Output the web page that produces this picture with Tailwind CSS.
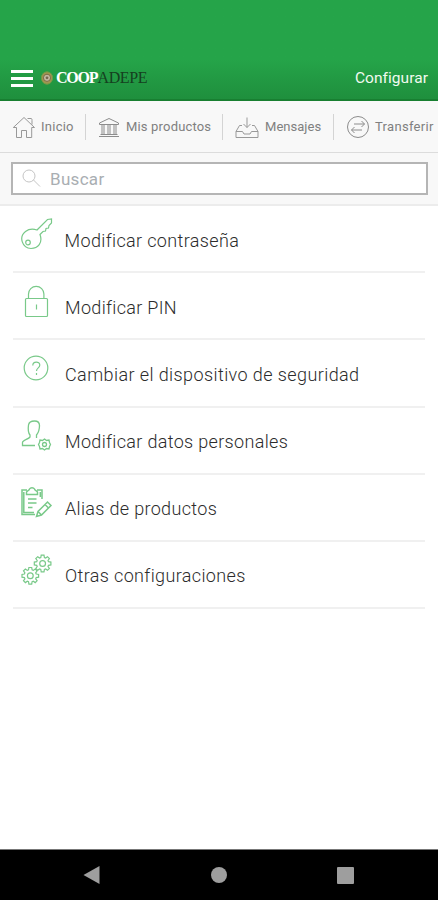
<!DOCTYPE html>
<html lang="es">
<head>
<meta charset="utf-8">
<meta name="viewport" content="width=device-width, initial-scale=1">
<title>Configurar</title>
<script src="https://cdn.jsdelivr.net/npm/@tailwindcss/browser@4"></script>
</head>
<body class="bg-white">
<div class="flex h-[900px] w-[438px] flex-col overflow-hidden bg-white font-['Roboto',sans-serif]">
  <header class="flex h-[101px] shrink-0 items-end border-b-2 border-[#187f31] bg-linear-to-b from-[#25a449] from-60% to-[#1f8f3d] pl-[11px] pr-[10px]">
    <div class="flex h-[43px] w-full items-center">
      <div class="mt-[2px] flex w-[22px] flex-col gap-[4.5px]">
        <div class="h-[2.5px] bg-white"></div>
        <div class="h-[2.5px] bg-white"></div>
        <div class="h-[2.5px] bg-white"></div>
      </div>
      <svg class="ml-[7px]" width="14" height="16" viewBox="0 0 14 16" fill="none">
        <ellipse cx="7" cy="8" rx="5.6" ry="6.2" fill="#a09650" stroke="#6f9a45"/>
        <circle cx="7" cy="7.8" r="3.6" fill="#c3b8a0" stroke="#7b6a44"/>
        <circle cx="7" cy="7.8" r="1.4" fill="#75664e"/>
      </svg>
      <div class="ml-[2px] whitespace-nowrap font-['Liberation_Serif',serif] text-[16px] leading-5"><span class="font-bold tracking-[-1.2px] text-white">COOP</span><span class="tracking-[-0.35px] text-[#15401f]">ADEPE</span></div>
      <div class="ml-auto mt-[3px] text-[15.5px] tracking-[0.05px] text-[#f1faef]">Configurar</div>
    </div>
  </header>

  <nav class="flex h-[52px] shrink-0 items-center overflow-hidden border-b border-[#dcdcdc] bg-[#f8f8f8] text-[13px] whitespace-nowrap text-[#808080]">
    <div class="flex h-[26px] w-[86px] shrink-0 items-center border-r border-[#d4d4d4] pl-[12px]">
      <svg class="mt-[2px]" width="24" height="24" viewBox="0 0 24 24" fill="none" stroke="#999" stroke-width="1"><path d="M4.5 11.5H1.3L12 1.5l10.5 10h-2.8v10h-5.2v-7H9.500v7h-5zM15.500 2.500h3.500c1 0 1 1 1 2v4"/></svg>
      <span class="ml-[5px] tracking-[0.25px]">Inicio</span>
    </div>
    <div class="flex h-[26px] w-[137px] shrink-0 items-center border-r border-[#d4d4d4] pl-[12px]">
      <svg class="mt-[3px]" width="22" height="22" viewBox="0 0 22 22" fill="none" stroke="#8c8c8c" stroke-width="1"><path d="M1.500 7.500v-1.500L11 1.500l9.500 4.500v1.500zM1 19.500h20M2.500 17.500h17M4 8v9M6 8v9M10 8v9M12 8v9M16 8v9M18 8v9"/></svg>
      <span class="ml-[6px] tracking-[0.17px]">Mis productos</span>
    </div>
    <div class="flex h-[26px] w-[111px] shrink-0 items-center border-r border-[#d4d4d4] pl-[12px]">
      <svg class="mt-[2px]" width="24" height="24" viewBox="0 0 24 24" fill="none" stroke="#999" stroke-width="1"><path d="M12 1.500v10M8.500 8l3.500 3.500L15.500 8M7 9.500H4.500l-3.500 6v6h22v-6l-3.500-6H17M1 15.500h6.500l1.500 2.500h6l1.500-2.500H23"/></svg>
      <span class="ml-[6px] tracking-[0.03px]">Mensajes</span>
    </div>
    <div class="flex h-[26px] shrink-0 items-center pl-[12px]">
      <svg width="24" height="24" viewBox="0 0 24 24" fill="none" stroke="#8c8c8c" stroke-width="1"><circle cx="12" cy="12" r="10.500"/><path d="M8 9h10.500M15.500 6l3 3-3 3M16 15H5.500M8.500 12l-3 3 3 3"/></svg>
      <span class="ml-[5px] tracking-[0.3px]">Transferir</span>
    </div>
  </nav>

  <div class="h-[53px] shrink-0 border-b-2 border-[#ececec] bg-[#f8f8f8] px-[11px] pt-[9px]">
    <div class="flex h-[33px] w-[417px] items-center border-2 border-[#b5b5b5] bg-white pl-[9px]">
      <svg width="19" height="19" viewBox="0 0 19 19" fill="none" stroke="#c5c5c5" stroke-width="1"><circle cx="7" cy="7" r="6"/><path d="M11.500 11l6.500 6.500"/></svg>
      <span class="ml-[9px] mt-[2px] text-[17px] tracking-[0.3px] text-[#a9aeb2]">Buscar</span>
    </div>
  </div>

  <main class="flex-1 pl-[13px] pr-[13px] text-[18px] font-light whitespace-nowrap text-[#2c2c2c]">
    <div class="flex h-[67px] border-b-2 border-[#f0f0f0] pl-[7px]">
      <svg class="mt-[11px]" width="34" height="34" viewBox="0 0 34 34" fill="none" stroke="#79c989" stroke-width="1.200"><path d="M17 13L27.500 2.500l4-.5v4l-2.500 2.500-.5 2.500-2.500.5-.5 2.500-2.500.5-3 3C23 26 18 31.500 11 31.500A9.500 9.500 0 0 1 5.500 14.500C9 11.800 13.500 11.800 17 13z"/><circle cx="8" cy="25.500" r="2.300"/></svg>
      <span class="ml-[10.500px] pt-[21px] leading-[27px] tracking-[0.36px]">Modificar contraseña</span>
    </div>
    <div class="flex h-[67px] border-b-2 border-[#f0f0f0] pl-[7px]">
      <svg class="mt-[11px]" width="34" height="34" viewBox="0 0 34 34" fill="none" stroke="#79c989" stroke-width="1.200"><rect x="5.500" y="14.500" width="22" height="18" rx="1"/><path d="M8.500 14.500V10a7.700 7.700 0 0 1 15.400 0v4.500M16.500 20.500v5"/></svg>
      <span class="ml-[11px] pt-[20.500px] leading-[27px] tracking-[0.32px]">Modificar PIN</span>
    </div>
    <div class="flex h-[68px] border-b-2 border-[#f0f0f0] pl-[7px]">
      <svg class="mt-[11px]" width="34" height="34" viewBox="0 0 34 34" fill="none" stroke="#79c989" stroke-width="1.200"><circle cx="16" cy="17" r="11.800"/><path d="M12.800 14.500c0-4.500 7-4.500 7-.4 0 3-3.300 2.600-3.300 6M16.500 22v2"/></svg>
      <span class="ml-[11px] pt-[21px] leading-[27px] tracking-[0.41px]">Cambiar el dispositivo de seguridad</span>
    </div>
    <div class="flex h-[67px] border-b-2 border-[#f0f0f0] pl-[7px]">
      <svg class="mt-[11px]" width="34" height="34" viewBox="0 0 34 34" fill="none" stroke="#79c989" stroke-width="1.300"><path d="M15 26.500H2.500v-3c0-2 6-3.500 7.500-5.500v-2C7.500 13 8 9.500 8.500 6c.5-3 3-4 6-4 3.500 0 5 1.500 5 4.500 0 4-.5 6.500-3 9.500v3"/><path d="M24.500 20l2 1.500 2.500-.5.500 2.500 1 2-1 2-.5 2.500-2.500-.5-2 1.500-2-1.500-2.500.5-.5-2.500-1-2 1-2 .5-2.500 2.500.5z"/><circle cx="24.500" cy="25.500" r="2"/></svg>
      <span class="ml-[11px] pt-[20px] leading-[27px] tracking-[0.33px]">Modificar datos personales</span>
    </div>
    <div class="flex h-[67px] border-b-2 border-[#f0f0f0] pl-[7px]">
      <svg class="mt-[11px]" width="34" height="34" viewBox="0 0 34 34" fill="none" stroke="#79c989" stroke-width="1.500"><path d="M7 4H2v24.500h13M3.800 6v20.500H14M17 4h5v9M20.300 6v5M6.500 8.500V6c0-1 3-1.500 3-3 1-1.800 4-1.800 5 0 0 1.500 3 2 3 3v2.500zM8 13h8.500M8 17h8.500M8 21.500h4.500M16.500 30.500l1.500-5 9.500-9.500 3.500 3.500-9.500 9.500zM18 25.500l3.500 3.500M25 18.500l3.500 3.500"/></svg>
      <span class="ml-[11px] pt-[20px] leading-[27px] tracking-[0.33px]">Alias de productos</span>
    </div>
    <div class="flex h-[67px] border-b-2 border-[#f0f0f0] pl-[7px]">
      <svg class="mt-[11px]" width="34" height="34" viewBox="0 0 34 34" fill="none" stroke="#79c989" stroke-width="1.200">
        <defs><path id="gear" d="M5.900-1.800L8.300-1.400V1.400L5.900 1.800 5.400 3 6.800 4.900 4.900 6.800 3 5.400 1.800 5.900 1.400 8.300H-1.400L-1.800 5.900-3 5.400-4.900 6.800-6.800 4.900-5.400 3-5.900 1.800-8.300 1.400V-1.400L-5.900-1.800-5.400-3-6.800-4.900-4.900-6.800-3-5.400-1.800-5.900-1.400-8.300H1.400L1.800-5.900 3-5.400 4.900-6.800 6.800-4.900 5.400-3z"/></defs>
        <use href="#gear" x="10.300" y="22.800"/><circle cx="10.300" cy="22.800" r="2.900"/>
        <use href="#gear" x="22.600" y="10.500"/><circle cx="22.600" cy="10.500" r="2.900"/>
      </svg>
      <span class="ml-[11px] pt-[20px] leading-[27px] tracking-[0.36px]">Otras configuraciones</span>
    </div>
  </main>

  <footer class="flex h-[51px] shrink-0 items-center border-t border-[#777] bg-black pl-[83px]">
    <svg width="17" height="20" viewBox="0 0 17 20" fill="#9e9e9e"><path d="M0.500 10L16.500 1v18z"/></svg>
    <div class="ml-[111px] size-4 rounded-full bg-[#9e9e9e]"></div>
    <div class="ml-[110px] size-[17px] rounded-[1px] bg-[#9e9e9e]"></div>
  </footer>
</div>
</body>
</html>
